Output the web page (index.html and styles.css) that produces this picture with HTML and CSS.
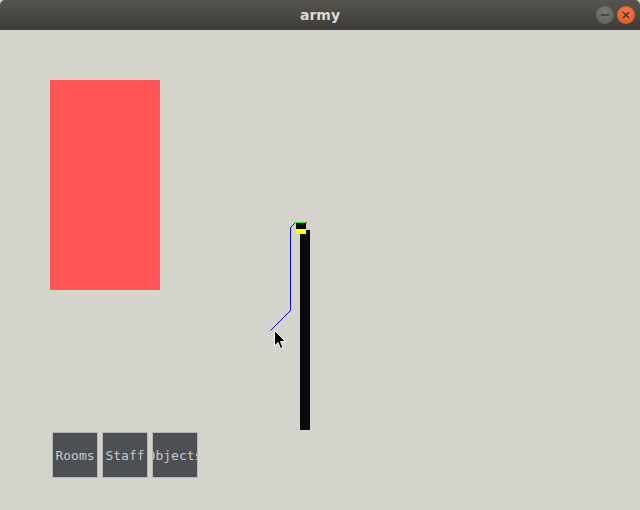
FILE: index.html
```html
<!DOCTYPE html>
<html>
<head>
<meta charset="utf-8">
<link rel="stylesheet" href="styles.css">
</head>
<body>
<div class="window">
  <div class="titlebar">
    <span class="title">army</span>
    <div class="controls">
      <span class="ctl min"><svg width="18" height="18" viewBox="0 0 18 18"><line x1="5" y1="9" x2="13" y2="9" stroke="#3c3b37" stroke-width="1.5"/></svg></span>
      <span class="ctl close"><svg width="18" height="18" viewBox="0 0 18 18"><path d="M6 6 L12 12 M12 6 L6 12" stroke="#3c3b37" stroke-width="1.6"/></svg></span>
    </div>
  </div>
  <div class="stage">
    <svg class="scene" width="640" height="480" viewBox="0 0 640 480">
      <rect x="50" y="50" width="110" height="210" fill="#ff5555"/>
      <rect x="300" y="200" width="10" height="200" fill="#0a0a0a"/>
      <rect x="296" y="192" width="10" height="1" fill="#00ff00"/>
      <rect x="306" y="192" width="1" height="1" fill="#ff0000"/>
      <rect x="296" y="193" width="10" height="6" fill="#0a0a0a"/>
      <rect x="296" y="199" width="10" height="5" fill="#ffff00"/>
      <polyline points="270.5,300.5 290.5,280.5 290.5,197.5 295.5,192.5" fill="none" stroke="#0000ff" stroke-width="1"/>
      <path d="M274.5 300.5 L274.5 316 L278 312.5 L280.5 318.5 L283 317.5 L280.5 311.5 L285.5 311.5 Z" fill="#000" stroke="#fff" stroke-width="1"/>
    </svg>
    <div class="toolbar">
      <button class="tool">Rooms</button>
      <button class="tool">Staff</button>
      <button class="tool">Objects</button>
    </div>
  </div>
</div>
</body>
</html>
```
FILE: styles.css
```css
html, body {
  margin: 0;
  padding: 0;
  background: #d4d3cc;
}
.window {
  width: 640px;
  height: 510px;
  display: flex;
  flex-direction: column;
  overflow: hidden;
}
.titlebar {
  height: 30px;
  flex: none;
  background: linear-gradient(#56544e, #3d3c38);
  border-radius: 5px 5px 0 0;
  display: flex;
  align-items: center;
  justify-content: center;
  position: relative;
}
.title {
  font-family: "DejaVu Sans", sans-serif;
  font-weight: bold;
  font-size: 14px;
  color: #dfdbd2;
  margin-top: 0px;
}
.controls {
  position: absolute;
  right: 5px;
  top: 6px;
  display: flex;
  gap: 3px;
}
.ctl {
  width: 18px;
  height: 18px;
  border-radius: 50%;
  display: block;
}
.ctl svg { display: block; }
.min {
  background: radial-gradient(circle at 50% 35%, #7a7975, #5d5c58);
  border: 0;
}
.close {
  background: radial-gradient(circle at 50% 35%, #f47a4b, #e0501f);
}
.stage {
  position: relative;
  flex: 1;
  background: #d4d3cc;
}
.scene {
  display: block;
}
.toolbar {
  position: absolute;
  left: 52px;
  top: 402px;
  display: flex;
  gap: 4px;
}
.tool {
  width: 46px;
  height: 46px;
  box-sizing: border-box;
  padding: 0;
  margin: 0;
  background: #4c5055;
  border: 1px solid #b9b8b0;
  color: #c9c9c7;
  font-family: "DejaVu Sans Mono", monospace;
  font-size: 13px;
  overflow: hidden;
  white-space: nowrap;
  display: flex;
  align-items: center;
  justify-content: center;
}
```
